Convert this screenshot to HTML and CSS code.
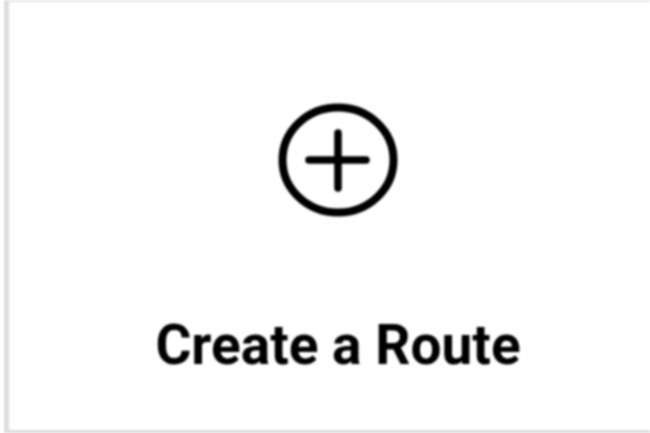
FILE: index.html
```html
<!DOCTYPE html>
<html lang="en">

<head>
    <meta charset="UTF-8">
    <title>Create a Route</title>
    <link rel="stylesheet" href="styles.css">
</head>

<body>
    <div class="route-card">
        <svg class="add-icon" viewBox="0 0 120 116" width="120" height="116">
            <ellipse cx="60" cy="58" rx="55.5" ry="52.5" fill="none" stroke="#000" stroke-width="8" />
            <path d="M31 58H88M60 31V86" fill="none" stroke="#000" stroke-width="7.5" stroke-linecap="round" />
        </svg>
        <div class="route-label">Create a Route</div>
    </div>
</body>

</html>
```

FILE: styles.css
```css
body {
    margin: 0;
    background: #fff;
    font-family: Roboto, "Liberation Sans", sans-serif;
}

.route-card {
    box-sizing: border-box;
    width: 646px;
    height: 433px;
    margin-left: 4px;
    padding-top: 100px;
    padding-left: 17px;
    display: flex;
    flex-direction: column;
    align-items: center;
    gap: 97px;
    border-top: 2px solid #e4e4e4;
    border-left: 5px solid #dcdcdc;
    border-bottom: 3px solid #dcdcdc;
    filter: blur(0.8px);
}

.add-icon {
    display: block;
}

.route-label {
    font-size: 55px;
    line-height: 60px;
    font-weight: 700;
    color: #000;
}
```
